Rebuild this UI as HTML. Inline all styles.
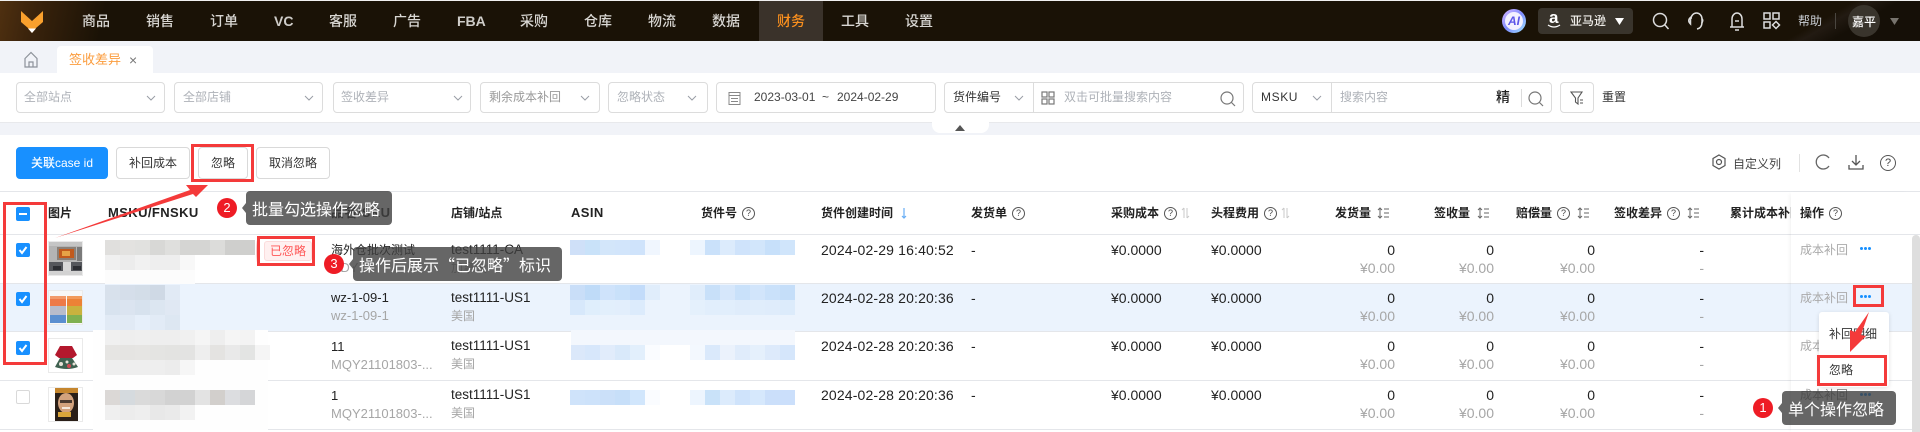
<!DOCTYPE html>
<html lang="zh-CN"><head><meta charset="utf-8"><style>
html,body{margin:0;padding:0;width:1920px;height:432px;overflow:hidden;background:#fff}
body{position:relative;font-family:"Liberation Sans","Noto Sans CJK SC",sans-serif;font-size:14px;color:#222}
.a{position:absolute}
.t{position:absolute;white-space:nowrap;line-height:18px}
.n{position:absolute;top:12px;line-height:18px;font-size:14px;font-weight:500;color:#d8d6d2;white-space:nowrap}
.nb{font-weight:700;color:#cfcdc9}
.s{position:absolute;top:82px;height:31px;box-sizing:border-box;border:1px solid #dcdcdc;border-radius:4px;background:#fff}
.p{position:absolute;top:88px;line-height:18px;font-size:12px;color:#aeb2b8;white-space:nowrap}
.b{position:absolute;top:147px;height:32px;box-sizing:border-box;border:1px solid #d9d9d9;border-radius:4px;background:#fff;font-size:12px;line-height:30px;text-align:center;color:#333}
.h{position:absolute;top:204px;line-height:18px;font-size:12px;font-weight:700;color:#222;white-space:nowrap}
.hl{font-size:13px;letter-spacing:.4px}
.q{position:absolute;width:11px;height:11px;border:1px solid #555;border-radius:50%;font-size:9px;line-height:11px;text-align:center;color:#444;top:207px}
.g{color:#a6a6a6}
.r{position:absolute;box-sizing:border-box;border:3px solid #f43a3a}
.tip{position:absolute;background:rgba(64,64,64,.8);border-radius:4px;color:#fff;font-family:"Noto Sans CJK SC","Liberation Sans",sans-serif;font-size:16px;line-height:34px;white-space:nowrap}
.c{position:absolute;width:20px;height:20px;border-radius:50%;background:#ee1c25;color:#fff;font-size:13px;line-height:20px;text-align:center}
.k{position:absolute;left:16px;width:14px;height:14px;border-radius:2px;background:#1890ff}
.l{position:absolute;left:0;width:1920px;height:1px;background:#e4e6ea}
.th{position:absolute;left:48px;width:35px;height:35px;box-sizing:border-box;border:1px solid #eaeaea;background:#fff;overflow:hidden}
.dots{position:absolute;left:1860px;width:11px;height:3px}
.dots i{position:absolute;width:3px;height:3px;border-radius:50%;background:#1890ff;top:0}
</style></head><body>

<!-- nav -->
<div class="a" style="left:0;top:0;width:1920px;height:1px;background:#f0f0f0"></div>
<div class="a" style="left:0;top:1px;width:1920px;height:40px;background:linear-gradient(102deg,#4f3010 0,#3a230c 35px,#1a1206 105px,#1a1206 100%)"></div>
<div class="a" style="left:1690px;top:1px;width:230px;height:40px;background:linear-gradient(150deg,transparent 55%,#221a12 60%,#150f07 70%)"></div>
<svg class="a" style="left:20px;top:10px" width="24" height="24" viewBox="0 0 24 24"><path d="M1 1L12 11L23 1V12L16 18L12 23L8 18L1 12Z" fill="#f9a02d"/><path d="M8 18.500H16L12 23Z" fill="#fff"/></svg>
<div class="a" style="left:759px;top:1px;width:64px;height:40px;background:#3a322a"></div>
<span class="n" style="left:82px">商品</span><span class="n" style="left:146px">销售</span><span class="n" style="left:210px">订单</span><span class="n nb" style="left:274px">VC</span><span class="n" style="left:329px">客服</span><span class="n" style="left:393px">广告</span><span class="n nb" style="left:457px">FBA</span><span class="n" style="left:520px">采购</span><span class="n" style="left:584px">仓库</span><span class="n" style="left:648px">物流</span><span class="n" style="left:712px">数据</span><span class="n" style="left:777px;color:#f98f1e">财务</span><span class="n" style="left:841px">工具</span><span class="n" style="left:905px">设置</span>
<div class="a" style="left:1502px;top:9px;width:24px;height:24px;border-radius:50%;background:linear-gradient(135deg,#d8b8ff,#7f8cff 50%,#9fe6ff);text-align:center"></div>
<div class="a" style="left:1505px;top:12px;width:18px;height:18px;border-radius:50%;background:#f3f1ff;color:#5b55e8;font-size:12px;font-weight:700;font-style:italic;line-height:18px;text-align:center">AI</div>
<div class="a" style="left:1538px;top:8px;width:95px;height:26px;border-radius:4px;background:#39342c"></div>
<span class="t" style="left:1549px;top:9px;font-size:17px;font-weight:700;color:#fff">a</span>
<svg class="a" style="left:1547px;top:24px" width="14" height="5" viewBox="0 0 14 5"><path d="M1 1Q7 5 13 1" fill="none" stroke="#fff" stroke-width="1.300"/></svg>
<span class="t" style="left:1570px;top:12px;font-size:12px;font-weight:500;color:#f0eeea">亚马逊</span>
<svg class="a" style="left:1615px;top:18px" width="9" height="7"><path d="M0 0H9L4.500 7Z" fill="#fff"/></svg>
<svg class="a" style="left:1652px;top:12px" width="18" height="18" fill="none" stroke="#ddd" stroke-width="1.500"><circle cx="8" cy="8" r="6.500"/><path d="M12.500 12.500L16.500 17"/></svg>
<svg class="a" style="left:1687px;top:11px" width="18" height="20" fill="none" stroke="#ddd" stroke-width="1.500"><path d="M4 8A5.500 6 0 0 1 15 8V11Q15 17 10 18"/><path d="M3.500 6.500Q0 9.500 3.500 13Z"/><path d="M14.500 7.500Q17 9 14.500 12.500"/></svg>
<svg class="a" style="left:1728px;top:11px" width="18" height="20" fill="none" stroke="#ddd" stroke-width="1.500"><path d="M2 16H16M4 16V8A5 6 0 0 1 14 8V16"/><path d="M7 10H11M7 19H11"/></svg>
<svg class="a" style="left:1763px;top:12px" width="18" height="18" fill="none" stroke="#ddd" stroke-width="1.500"><rect x="1" y="1" width="6" height="6"/><rect x="10" y="1" width="6" height="6"/><rect x="1" y="10" width="6" height="6"/><path d="M13 9.500L16.500 13L13 16.500L9.500 13Z"/></svg>
<span class="t" style="left:1798px;top:12px;font-size:12px;color:#c8ccd2">帮助</span>
<div class="a" style="left:1835px;top:13px;width:1px;height:16px;background:#4a4640"></div>
<div class="a" style="left:1848px;top:5px;width:32px;height:32px;border-radius:50%;background:#39342c"></div>
<span class="t" style="left:1852px;top:13px;font-size:12px;font-weight:500;color:#fff">嘉平</span>
<svg class="a" style="left:1890px;top:18px" width="9" height="7"><path d="M0 0H9L4.500 7Z" fill="#77736d"/></svg>

<!-- tabs -->
<div class="a" style="left:0;top:41px;width:1920px;height:32px;background:#f1f3f8"></div>
<svg class="a" style="left:23px;top:51px" width="16" height="17" fill="none" stroke="#8d929a" stroke-width="1.200"><path d="M2 7.500L8 1.500L14 7.500V16H2Z"/><path d="M6 16V11H10V16"/></svg>
<div class="a" style="left:57px;top:46px;width:96px;height:27px;background:#fff;border-radius:4px 4px 0 0"></div>
<span class="t" style="left:69px;top:51px;font-size:13px;color:#fb9d3f">签收差异</span>
<span class="t" style="left:129px;top:51px;font-size:14px;color:#777">×</span>

<!-- filters -->
<div class="s" style="left:16px;width:149px"></div><span class="p" style="left:24px">全部站点</span>
<div class="s" style="left:174px;width:149px"></div><span class="p" style="left:183px">全部店铺</span>
<div class="s" style="left:333px;width:138px"></div><span class="p" style="left:341px">签收差异</span>
<div class="s" style="left:480px;width:120px"></div><span class="p" style="left:489px;color:#999">剩余成本补回</span>
<div class="s" style="left:608px;width:100px"></div><span class="p" style="left:617px">忽略状态</span>
<div class="s" style="left:716px;width:220px"></div>
<svg class="a" style="left:728px;top:91px" width="13" height="14" fill="none" stroke="#888"><rect x="1" y="1.500" width="11" height="12"/><path d="M1 4.500H12M3 7.500H10M3 10.500H10"/></svg>
<span class="t" style="left:754px;top:88px;font-size:12px;color:#444">2023-03-01</span>
<span class="t" style="left:822px;top:88px;font-size:12px;color:#444">~</span>
<span class="t" style="left:837px;top:88px;font-size:12px;color:#444">2024-02-29</span>
<div class="s" style="left:944px;width:300px"></div><div class="a" style="left:1033px;top:82px;width:1px;height:31px;background:#dcdcdc"></div>
<span class="t" style="left:953px;top:88px;font-size:12px;color:#333">货件编号</span>
<svg class="a" style="left:1041px;top:91px" width="14" height="14" fill="none" stroke="#777" stroke-width="1.200"><rect x="1" y="1" width="5" height="5"/><rect x="8" y="1" width="5" height="5"/><rect x="1" y="8" width="5" height="5"/><rect x="8" y="8" width="5" height="5"/></svg>
<span class="p" style="left:1064px">双击可批量搜索内容</span>
<svg class="a" style="left:1220px;top:91px" width="16" height="16" fill="none" stroke="#777" stroke-width="1.200"><circle cx="7" cy="7" r="6"/><path d="M11 11L15 15"/></svg>
<div class="s" style="left:1252px;width:300px"></div><div class="a" style="left:1331px;top:82px;width:1px;height:31px;background:#dcdcdc"></div>
<span class="t" style="left:1261px;top:88px;font-size:12px;letter-spacing:.6px;color:#333">MSKU</span>
<span class="p" style="left:1340px">搜索内容</span>
<span class="t" style="left:1496px;top:88px;font-size:14px;font-weight:500;color:#222">精</span>
<div class="a" style="left:1521px;top:89px;width:1px;height:18px;background:#dcdcdc"></div>
<svg class="a" style="left:1528px;top:91px" width="16" height="16" fill="none" stroke="#777" stroke-width="1.200"><circle cx="7" cy="7" r="6"/><path d="M11 11L15 15"/></svg>
<div class="s" style="left:1560px;width:34px"></div>
<svg class="a" style="left:1570px;top:91px" width="14" height="14" fill="none" stroke="#555" stroke-width="1.100"><path d="M1 1H12L8 7V13L5.500 11V7Z"/><path d="M10 9H13M10 12H13"/></svg>
<span class="t" style="left:1602px;top:88px;font-size:12px;color:#333">重置</span>
<svg class="a" style="left:0;top:0" width="1920" height="122" fill="none" stroke="#9a9ea6" stroke-width="1"><path d="M147 96L151 100L155 96M305 96L309 100L313 96M454 96L458 100L462 96M581 96L585 100L589 96M688 96L692 100L696 96M1015 96L1019 100L1023 96M1313 96L1317 100L1321 96"/></svg>
<div class="a" style="left:0;top:122px;width:1920px;height:13px;background:#f1f3f8;border-top:1px solid #e8e9ec;box-sizing:border-box"></div>
<div class="a" style="left:932px;top:122px;width:57px;height:11px;background:#fff;border-radius:0 0 8px 8px"></div>
<svg class="a" style="left:955px;top:125px" width="10" height="6"><path d="M0 6L5 0L10 6Z" fill="#555"/></svg>

<!-- toolbar -->
<div class="b" style="left:16px;top:147px;width:92px;background:#1890ff;border-color:#1890ff;color:#fff;font-weight:500">关联case id</div>
<div class="b" style="left:116px;width:74px">补回成本</div>
<div class="b" style="left:198px;width:50px">忽略</div>
<div class="b" style="left:256px;width:74px">取消忽略</div>
<svg class="a" style="left:1711px;top:154px" width="16" height="16" fill="none" stroke="#555" stroke-width="1.200"><path d="M8 1L14 4.500V11.500L8 15L2 11.500V4.500Z"/><circle cx="8" cy="8" r="2.500"/></svg>
<span class="t" style="left:1733px;top:155px;font-size:12px;color:#444">自定义列</span>
<div class="a" style="left:1799px;top:154px;width:1px;height:18px;background:#e2e2e2"></div>
<svg class="a" style="left:1815px;top:154px" width="16" height="16" fill="none" stroke="#666" stroke-width="1.300"><path d="M14 4A7 7 0 1 0 14 12"/></svg>
<svg class="a" style="left:1848px;top:154px" width="16" height="16" fill="none" stroke="#555" stroke-width="1.300"><path d="M8 1V11M4 7L8 11L12 7M1 11V15H15V11"/></svg>
<div class="a" style="left:1880px;top:155px;width:14px;height:14px;border:1.300px solid #555;border-radius:50%;font-size:11px;line-height:14px;text-align:center;color:#444">?</div>

<!-- table lines -->
<div class="l" style="top:191px"></div>
<div class="l" style="top:234px"></div>
<div class="a" style="left:0;top:284px;width:1912px;height:47px;background:#ebf3fd"></div>
<div class="l" style="top:283px"></div><div class="l" style="top:331px"></div><div class="l" style="top:380px"></div><div class="l" style="top:429px"></div>

<!-- header -->
<div class="k" style="top:207px"><div class="a" style="left:3px;top:6px;width:8px;height:2px;background:#fff"></div></div>
<span class="h" style="left:48px">图片</span>
<span class="h hl" style="left:108px">MSKU/FNSKU</span>
<span class="h hl" style="left:331px">品名/SKU</span>
<span class="h" style="left:451px">店铺/站点</span>
<span class="h hl" style="left:571px">ASIN</span>
<span class="h" style="left:701px">货件号</span><span class="q" style="left:742px">?</span>
<span class="h" style="left:821px">货件创建时间</span>
<svg class="a" style="left:901px;top:206px" width="6" height="14" fill="none" stroke="#69aef5" stroke-width="1.200"><path d="M3 2V12M1 10L3 12L5 10"/></svg>
<span class="h" style="left:971px">发货单</span><span class="q" style="left:1012px">?</span>
<span class="h" style="left:1111px">采购成本</span><span class="q" style="left:1164px">?</span>
<svg class="a" style="left:1181px;top:206px" width="9" height="14" fill="none" stroke="#c8c8c8"><path d="M3 2V12M6 2V12M1 4L3 2M8 10L6 12"/></svg>
<span class="h" style="left:1211px">头程费用</span><span class="q" style="left:1264px">?</span>
<svg class="a" style="left:1281px;top:206px" width="9" height="14" fill="none" stroke="#c8c8c8"><path d="M3 2V12M6 2V12M1 4L3 2M8 10L6 12"/></svg>
<span class="h" style="left:1335px">发货量</span>
<span class="h" style="left:1434px">签收量</span>
<span class="h" style="left:1516px">赔偿量</span><span class="q" style="left:1557px">?</span>
<span class="h" style="left:1614px">签收差异</span><span class="q" style="left:1667px">?</span>
<svg class="a" style="left:1377px;top:206px" width="13" height="14" fill="none" stroke="#666"><path d="M3 2V12M1 4L3 2L5 4M1 10L3 12L5 10M7 3H12M7 7H12M7 11H12"/></svg>
<svg class="a" style="left:1477px;top:206px" width="13" height="14" fill="none" stroke="#666"><path d="M3 2V12M1 4L3 2L5 4M1 10L3 12L5 10M7 3H12M7 7H12M7 11H12"/></svg>
<svg class="a" style="left:1577px;top:206px" width="13" height="14" fill="none" stroke="#666"><path d="M3 2V12M1 4L3 2L5 4M1 10L3 12L5 10M7 3H12M7 7H12M7 11H12"/></svg>
<svg class="a" style="left:1687px;top:206px" width="13" height="14" fill="none" stroke="#666"><path d="M3 2V12M1 4L3 2L5 4M1 10L3 12L5 10M7 3H12M7 7H12M7 11H12"/></svg>
<span class="h" style="left:1730px">累计成本补回</span>

<!-- checkboxes -->
<div class="k" style="top:243px"><svg width="14" height="14" fill="none" stroke="#fff" stroke-width="2"><path d="M3.500 7L6 10L10.500 4"/></svg></div>
<div class="k" style="top:292px"><svg width="14" height="14" fill="none" stroke="#fff" stroke-width="2"><path d="M3.500 7L6 10L10.500 4"/></svg></div>
<div class="k" style="top:341px"><svg width="14" height="14" fill="none" stroke="#fff" stroke-width="2"><path d="M3.500 7L6 10L10.500 4"/></svg></div>
<div class="k" style="top:390px;background:#fff;box-sizing:border-box;border:1.500px solid #d9d9d9"></div>

<!-- thumbs -->
<div class="th" style="top:241px"><svg width="35" height="35"><rect width="35" height="35" fill="#b4b4b4"/><rect x="0" y="0" width="35" height="4" fill="#c5c5c5"/><rect x="8" y="5" width="19" height="13" fill="#8a8078"/><rect x="10" y="7" width="15" height="9" fill="#c25a1d"/><rect x="13" y="9" width="8" height="5" fill="#e6a347"/><rect x="28" y="5" width="6" height="14" fill="#7a7a7a"/><rect x="0" y="20" width="35" height="9" fill="#55575c"/><rect x="4" y="24" width="8" height="4" fill="#2c2e33"/><rect x="24" y="24" width="8" height="4" fill="#2c2e33"/><rect x="14" y="20" width="8" height="9" fill="#d8d8d8"/><rect x="0" y="29" width="35" height="6" fill="#d2d2d2"/></svg></div>
<div class="th" style="top:290px"><svg width="35" height="35"><rect width="35" height="35" fill="#f7f7f7"/><rect x="1" y="5" width="16" height="3" fill="#f29a6a"/><rect x="18" y="5" width="16" height="3" fill="#f29a5a"/><rect x="1" y="8" width="16" height="7" fill="#ee7a48"/><rect x="18" y="8" width="16" height="7" fill="#ec8236"/><rect x="1" y="15" width="16" height="9" fill="#b8bccb"/><rect x="18" y="15" width="16" height="9" fill="#c9b23e"/><rect x="1" y="24" width="16" height="8" fill="#5b8fd0"/><rect x="18" y="24" width="16" height="8" fill="#80b050"/></svg></div>
<div class="th" style="top:338px"><svg width="35" height="35"><path d="M6 16L11 7H23L28 16L24 19H10Z" fill="#b3182d"/><path d="M6 28L11 19H23L29 28Q18 32 6 28Z" fill="#3f6150"/><circle cx="12" cy="25" r="2" fill="#e8e3d8"/><circle cx="18" cy="23" r="1.500" fill="#e8e3d8"/><circle cx="20" cy="27" r="2" fill="#d24b55"/><circle cx="25" cy="25" r="1.500" fill="#e8e3d8"/></svg></div>
<div class="th" style="top:387px"><svg width="35" height="35"><rect x="6" width="23" height="35" fill="#2a1f18"/><rect x="6" width="23" height="5" fill="#c5862e"/><ellipse cx="17" cy="15" rx="8" ry="10" fill="#d2a27d"/><rect x="11" y="12" width="12" height="3" fill="#4a3a30"/><rect x="13" y="19" width="8" height="2" fill="#f5e8dc"/><rect x="9" y="24" width="13" height="5" fill="#d9a53a"/></svg></div>

<!-- mosaic -->
<svg class="a" style="left:0;top:0" width="1920" height="432" shape-rendering="crispEdges">
<g>
<rect x="105" y="240" width="15" height="15" fill="#e0dfdd"/><rect x="120" y="240" width="15" height="15" fill="#e3e2e0"/><rect x="135" y="240" width="15" height="15" fill="#e1e1df"/><rect x="150" y="240" width="15" height="15" fill="#d8d8d6"/><rect x="165" y="240" width="15" height="15" fill="#dfdfdd"/><rect x="180" y="240" width="15" height="15" fill="#d5d5d3"/><rect x="195" y="240" width="15" height="15" fill="#d5d5d3"/><rect x="210" y="240" width="15" height="15" fill="#dcdcda"/><rect x="225" y="240" width="15" height="15" fill="#cfcfcd"/><rect x="240" y="240" width="15" height="15" fill="#cfcfcd"/>
<rect x="105" y="255" width="15" height="15" fill="#f0f0f0"/><rect x="120" y="255" width="15" height="15" fill="#ececec"/><rect x="135" y="255" width="15" height="15" fill="#f1f1f1"/><rect x="150" y="255" width="15" height="15" fill="#eee"/><rect x="165" y="255" width="15" height="15" fill="#eee"/><rect x="180" y="255" width="15" height="15" fill="#f8f8f8"/>
<rect x="105" y="270" width="90" height="14" fill="#fcfcfc"/>
<rect x="105" y="285" width="15" height="15" fill="#d8e1ec"/><rect x="120" y="285" width="15" height="15" fill="#d5deea"/><rect x="135" y="285" width="15" height="15" fill="#d3dde8"/><rect x="150" y="285" width="15" height="15" fill="#cfd9e5"/><rect x="165" y="285" width="15" height="15" fill="#e1eaf5"/>
<rect x="105" y="300" width="15" height="15" fill="#d8e3ef"/><rect x="120" y="300" width="15" height="15" fill="#dbe4f0"/><rect x="135" y="300" width="15" height="15" fill="#d7e2ee"/><rect x="150" y="300" width="15" height="15" fill="#dce6f1"/><rect x="165" y="300" width="15" height="15" fill="#e0e8f3"/>
<rect x="105" y="315" width="15" height="15" fill="#e1eaf5"/><rect x="120" y="315" width="15" height="15" fill="#e1eaf5"/><rect x="135" y="315" width="15" height="15" fill="#e6effa"/><rect x="150" y="315" width="15" height="15" fill="#e2ebf6"/><rect x="165" y="315" width="15" height="15" fill="#dde7f2"/>
<rect x="93" y="330" width="175" height="100" fill="#fefefe"/>
<rect x="105" y="330" width="15" height="15" fill="#f0f0f0"/><rect x="120" y="330" width="15" height="15" fill="#eee"/><rect x="135" y="330" width="15" height="15" fill="#efefef"/><rect x="150" y="330" width="15" height="15" fill="#eee"/><rect x="165" y="330" width="15" height="15" fill="#eee"/><rect x="180" y="330" width="15" height="15" fill="#f0f0f0"/><rect x="195" y="330" width="15" height="15" fill="#f5f5f5"/><rect x="210" y="330" width="15" height="15" fill="#eee"/><rect x="225" y="330" width="15" height="15" fill="#f5f5f5"/><rect x="240" y="330" width="15" height="15" fill="#f3f3f3"/>
<rect x="105" y="345" width="15" height="15" fill="#e6e5e3"/><rect x="120" y="345" width="15" height="15" fill="#e5e4e2"/><rect x="135" y="345" width="15" height="15" fill="#e6e5e3"/><rect x="150" y="345" width="15" height="15" fill="#e4e4e2"/><rect x="165" y="345" width="15" height="15" fill="#e3e3e1"/><rect x="180" y="345" width="15" height="15" fill="#e3e3e2"/><rect x="195" y="345" width="15" height="15" fill="#eee"/><rect x="210" y="345" width="15" height="15" fill="#e4e3e1"/><rect x="225" y="345" width="15" height="15" fill="#e9e9e9"/><rect x="240" y="345" width="15" height="15" fill="#e3e4e3"/><rect x="255" y="345" width="15" height="15" fill="#f5f5f5"/>
<rect x="105" y="360" width="15" height="15" fill="#eee"/><rect x="120" y="360" width="15" height="15" fill="#eee"/><rect x="135" y="360" width="15" height="15" fill="#eee"/><rect x="150" y="360" width="15" height="15" fill="#eee"/><rect x="165" y="360" width="15" height="15" fill="#ececec"/><rect x="180" y="360" width="15" height="15" fill="#f6f6f6"/>
<rect x="105" y="390" width="15" height="15" fill="#dbd8d6"/><rect x="120" y="390" width="15" height="15" fill="#d5dade"/><rect x="135" y="390" width="15" height="15" fill="#dadada"/><rect x="150" y="390" width="15" height="15" fill="#d8d8d8"/><rect x="165" y="390" width="15" height="15" fill="#d2d2d2"/><rect x="180" y="390" width="15" height="15" fill="#d2d2d2"/><rect x="195" y="390" width="15" height="15" fill="#e3e3e3"/><rect x="210" y="390" width="15" height="15" fill="#d2cfcc"/><rect x="225" y="390" width="15" height="15" fill="#dcdde0"/><rect x="240" y="390" width="15" height="15" fill="#d5d6d8"/>
<rect x="105" y="405" width="15" height="15" fill="#efefef"/><rect x="120" y="405" width="15" height="15" fill="#ececec"/><rect x="135" y="405" width="15" height="15" fill="#eee"/><rect x="150" y="405" width="15" height="15" fill="#e8e8e8"/><rect x="165" y="405" width="15" height="15" fill="#eaeaea"/><rect x="180" y="405" width="15" height="15" fill="#f2f2f2"/>
</g>
<g>
<rect x="570" y="240" width="15" height="15" fill="#cfe0f8"/><rect x="585" y="240" width="15" height="15" fill="#c9e2f9"/><rect x="600" y="240" width="15" height="15" fill="#d3e6fa"/><rect x="615" y="240" width="15" height="15" fill="#d2e5fb"/><rect x="630" y="240" width="15" height="15" fill="#cfe3fb"/><rect x="645" y="240" width="15" height="15" fill="#f0f6fe"/><rect x="690" y="240" width="15" height="15" fill="#edf5fe"/><rect x="705" y="240" width="15" height="15" fill="#cae1fa"/><rect x="720" y="240" width="15" height="15" fill="#dcebfc"/><rect x="735" y="240" width="15" height="15" fill="#cfe3fb"/><rect x="750" y="240" width="15" height="15" fill="#d2e6fb"/><rect x="765" y="240" width="15" height="15" fill="#c7e0fa"/><rect x="780" y="240" width="15" height="15" fill="#d0e5fb"/>
<rect x="570" y="285" width="15" height="15" fill="#c9def8"/><rect x="585" y="285" width="15" height="15" fill="#bfdbf8"/><rect x="600" y="285" width="15" height="15" fill="#cfe3fb"/><rect x="615" y="285" width="15" height="15" fill="#c9e1fa"/><rect x="630" y="285" width="15" height="15" fill="#c3dcfa"/><rect x="645" y="285" width="15" height="15" fill="#e0edfb"/><rect x="690" y="285" width="15" height="15" fill="#e0edfb"/><rect x="705" y="285" width="15" height="15" fill="#c8e0f9"/><rect x="720" y="285" width="15" height="15" fill="#d6e7fb"/><rect x="735" y="285" width="15" height="15" fill="#c9e1fa"/><rect x="750" y="285" width="15" height="15" fill="#d2e5fb"/><rect x="765" y="285" width="15" height="15" fill="#cae1fa"/><rect x="780" y="285" width="15" height="15" fill="#c5def9"/>
<rect x="570" y="300" width="15" height="15" fill="#d7e8fb"/><rect x="585" y="300" width="15" height="15" fill="#dfeefc"/><rect x="600" y="300" width="15" height="15" fill="#e2effc"/><rect x="615" y="300" width="15" height="15" fill="#e2eefc"/><rect x="630" y="300" width="15" height="15" fill="#dcebfc"/><rect x="690" y="300" width="15" height="15" fill="#e4f0fc"/><rect x="705" y="300" width="15" height="15" fill="#e1eefc"/><rect x="720" y="300" width="15" height="15" fill="#e1eefc"/><rect x="735" y="300" width="15" height="15" fill="#dfecfb"/><rect x="750" y="300" width="15" height="15" fill="#e0edfb"/><rect x="765" y="300" width="15" height="15" fill="#dfecfb"/><rect x="780" y="300" width="15" height="15" fill="#dcebfb"/>
<rect x="571" y="330" width="224" height="15" fill="#f3f7fd"/>
<rect x="571" y="345" width="14" height="15" fill="#dbe8fa"/><rect x="585" y="345" width="15" height="15" fill="#d7e7fb"/><rect x="600" y="345" width="15" height="15" fill="#e1ecfb"/><rect x="615" y="345" width="15" height="15" fill="#d9e9fa"/><rect x="630" y="345" width="15" height="15" fill="#e2effc"/><rect x="645" y="345" width="15" height="15" fill="#fafcff"/><rect x="690" y="345" width="15" height="15" fill="#f3f8fe"/><rect x="705" y="345" width="15" height="15" fill="#dae9fb"/><rect x="720" y="345" width="15" height="15" fill="#ebf2fc"/><rect x="735" y="345" width="15" height="15" fill="#e0ecfb"/><rect x="750" y="345" width="15" height="15" fill="#e5f0fc"/><rect x="765" y="345" width="15" height="15" fill="#ddeafb"/><rect x="780" y="345" width="15" height="15" fill="#d5e6fb"/>
<rect x="570" y="390" width="15" height="15" fill="#cfe3fa"/><rect x="585" y="390" width="15" height="15" fill="#cde2fa"/><rect x="600" y="390" width="15" height="15" fill="#cbe0f9"/><rect x="615" y="390" width="15" height="15" fill="#c7dff9"/><rect x="630" y="390" width="15" height="15" fill="#d1e6fc"/><rect x="645" y="390" width="15" height="15" fill="#fafcff"/><rect x="690" y="390" width="15" height="15" fill="#edf5fe"/><rect x="705" y="390" width="15" height="15" fill="#c9e2f9"/><rect x="720" y="390" width="15" height="15" fill="#dcebfc"/><rect x="735" y="390" width="15" height="15" fill="#cfe3fb"/><rect x="750" y="390" width="15" height="15" fill="#d6e8fc"/><rect x="765" y="390" width="15" height="15" fill="#cbdffa"/><rect x="780" y="390" width="15" height="15" fill="#cbdffb"/>
</g>
</svg>

<!-- 已忽略 tag -->
<div class="a" style="left:264px;top:241px;width:48px;height:20px;box-sizing:border-box;background:#fff0f0;border:1px solid #fbdcdc;border-radius:3px;color:#f55;font-size:12px;line-height:18px;text-align:center">已忽略</div>
<div class="a" style="left:256px;top:238px;width:4px;height:26px;background:#f9c8c8;border-radius:50% 0 0 50%"></div>

<!-- row text -->
<span class="t" style="left:331px;top:241px;font-size:12px">海外仓批次测试</span>
<span class="t g" style="left:331px;top:259px;font-size:13px">DDY</span>
<span class="t" style="left:451px;top:241px;font-size:13.500px">test1111-CA</span>
<span class="t g" style="left:451px;top:259px;font-size:12px">加拿大</span>
<span class="t" style="left:331px;top:289px;font-size:13px">wz-1-09-1</span>
<span class="t g" style="left:331px;top:307px;font-size:13px">wz-1-09-1</span>
<span class="t" style="left:451px;top:289px;font-size:13.500px">test1111-US1</span>
<span class="t g" style="left:451px;top:307px;font-size:12px">美国</span>
<span class="t" style="left:331px;top:338px;font-size:13px">11</span>
<span class="t g" style="left:331px;top:356px;font-size:13px">MQY21101803-...</span>
<span class="t" style="left:451px;top:337px;font-size:13.500px">test1111-US1</span>
<span class="t g" style="left:451px;top:355px;font-size:12px">美国</span>
<span class="t" style="left:331px;top:387px;font-size:13px">1</span>
<span class="t g" style="left:331px;top:405px;font-size:13px">MQY21101803-...</span>
<span class="t" style="left:451px;top:386px;font-size:13.500px">test1111-US1</span>
<span class="t g" style="left:451px;top:404px;font-size:12px">美国</span>

<span class="t" style="left:821px;top:241px;letter-spacing:.15px">2024-02-29 16:40:52</span>
<span class="t" style="left:821px;top:289px;letter-spacing:.15px">2024-02-28 20:20:36</span>
<span class="t" style="left:821px;top:337px;letter-spacing:.15px">2024-02-28 20:20:36</span>
<span class="t" style="left:821px;top:386px;letter-spacing:.15px">2024-02-28 20:20:36</span>
<span class="t" style="left:971px;top:241px">-</span><span class="t" style="left:971px;top:289px">-</span><span class="t" style="left:971px;top:337px">-</span><span class="t" style="left:971px;top:386px">-</span>
<span class="t" style="left:1111px;top:241px">¥0.0000</span><span class="t" style="left:1211px;top:241px">¥0.0000</span>
<span class="t" style="left:1111px;top:289px">¥0.0000</span><span class="t" style="left:1211px;top:289px">¥0.0000</span>
<span class="t" style="left:1111px;top:337px">¥0.0000</span><span class="t" style="left:1211px;top:337px">¥0.0000</span>
<span class="t" style="left:1111px;top:386px">¥0.0000</span><span class="t" style="left:1211px;top:386px">¥0.0000</span>

<span class="t" style="right:525px;top:241px">0</span><span class="t g" style="right:525px;top:259px">¥0.00</span>
<span class="t" style="right:426px;top:241px">0</span><span class="t g" style="right:426px;top:259px">¥0.00</span>
<span class="t" style="right:325px;top:241px">0</span><span class="t g" style="right:325px;top:259px">¥0.00</span>
<span class="t" style="right:216px;top:241px">-</span><span class="t g" style="right:216px;top:259px">-</span>
<span class="t" style="right:525px;top:289px">0</span><span class="t g" style="right:525px;top:307px">¥0.00</span>
<span class="t" style="right:426px;top:289px">0</span><span class="t g" style="right:426px;top:307px">¥0.00</span>
<span class="t" style="right:325px;top:289px">0</span><span class="t g" style="right:325px;top:307px">¥0.00</span>
<span class="t" style="right:216px;top:289px">-</span><span class="t g" style="right:216px;top:307px">-</span>
<span class="t" style="right:525px;top:337px">0</span><span class="t g" style="right:525px;top:355px">¥0.00</span>
<span class="t" style="right:426px;top:337px">0</span><span class="t g" style="right:426px;top:355px">¥0.00</span>
<span class="t" style="right:325px;top:337px">0</span><span class="t g" style="right:325px;top:355px">¥0.00</span>
<span class="t" style="right:216px;top:337px">-</span><span class="t g" style="right:216px;top:355px">-</span>
<span class="t" style="right:525px;top:386px">0</span><span class="t g" style="right:525px;top:404px">¥0.00</span>
<span class="t" style="right:426px;top:386px">0</span><span class="t g" style="right:426px;top:404px">¥0.00</span>
<span class="t" style="right:325px;top:386px">0</span><span class="t g" style="right:325px;top:404px">¥0.00</span>
<span class="t" style="right:216px;top:386px">-</span><span class="t g" style="right:216px;top:404px">-</span>

<!-- fixed op col -->
<div class="a" style="left:1791px;top:192px;width:121px;height:240px;background:transparent;box-shadow:-3px 0 4px -2px rgba(0,0,0,.06)"></div>
<div class="a" style="left:1791px;top:192px;width:121px;height:42px;background:#fff"></div>
<div class="a" style="left:1791px;top:235px;width:121px;height:48px;background:#fff"></div>
<div class="a" style="left:1791px;top:284px;width:121px;height:47px;background:#ebf3fd"></div>
<div class="a" style="left:1791px;top:332px;width:121px;height:48px;background:#fff"></div>
<div class="a" style="left:1791px;top:381px;width:121px;height:48px;background:#fff"></div>
<span class="h" style="left:1800px">操作</span><span class="q" style="left:1829px">?</span>
<span class="t" style="left:1800px;top:241px;font-size:12px;color:#aaa">成本补回</span><div class="dots" style="top:247px"><i style="left:0"></i><i style="left:4px"></i><i style="left:8px"></i></div>
<span class="t" style="left:1800px;top:289px;font-size:12px;color:#aaa">成本补回</span><div class="dots" style="top:295px"><i style="left:0"></i><i style="left:4px"></i><i style="left:8px"></i></div>
<span class="t" style="left:1800px;top:337px;font-size:12px;color:#aaa">成本补回</span>
<span class="t" style="left:1800px;top:386px;font-size:12px;color:#888">成本补回</span><div class="dots" style="top:393px"><i style="left:0"></i><i style="left:4px"></i><i style="left:8px"></i></div>
<div class="a" style="left:1912px;top:235px;width:8px;height:197px;border-radius:4px 4px 0 0;background:#dedede"></div>

<!-- menu -->
<div class="a" style="left:1819px;top:312px;width:70px;height:75px;background:#fff;border-radius:3px;box-shadow:0 1px 5px rgba(0,0,0,.12)"></div>
<span class="t" style="left:1829px;top:325px;font-size:12px;color:#333">补回明细</span>
<span class="t" style="left:1829px;top:361px;font-size:12px;color:#333">忽略</span>

<!-- annotations -->
<div class="r" style="left:3px;top:202px;width:44px;height:163px"></div>
<div class="r" style="left:191px;top:144px;width:63px;height:38px"></div>
<div class="r" style="left:257px;top:236px;width:58px;height:30px"></div>
<div class="r" style="left:1853px;top:285px;width:31px;height:22px"></div>
<div class="r" style="left:1817px;top:355px;width:70px;height:31px"></div>
<svg class="a" style="left:0;top:0" width="1920" height="432"><path d="M55 238L190 190L186 185L208 185L196 197L193 194Z" fill="#f43a3a"/><path d="M1869 312L1861 335L1866 336L1850 352L1850 330L1855 332Z" fill="#f43a3a"/></svg>

<div class="tip" style="left:246px;top:191px;width:146px;height:34px;padding-left:6px;box-sizing:border-box">批量勾选操作忽略</div>
<div class="c" style="left:217px;top:198px">2</div>
<div class="tip" style="left:353px;top:247px;width:209px;height:34px;padding-left:6px;box-sizing:border-box">操作后展示“已忽略”标识</div>
<div class="c" style="left:324px;top:254px">3</div>
<div class="tip" style="left:1782px;top:391px;width:114px;height:34px;padding-left:6px;box-sizing:border-box">单个操作忽略</div>
<div class="c" style="left:1753px;top:398px">1</div>
<svg class="a" style="left:0;top:0" width="1920" height="432"><path d="M246 203L242 208L246 213Z" fill="#666"/><path d="M353 259L349 264L353 269Z" fill="#666"/><path d="M1782 403L1778 408L1782 413Z" fill="#666"/></svg>
</body></html>
